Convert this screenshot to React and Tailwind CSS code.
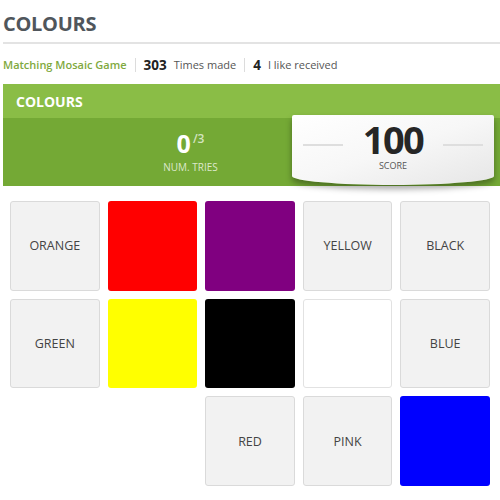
import React from "react";

const cells = [
    { label: "ORANGE" }, { color: "bg-[#ff0000]" }, { color: "bg-[#800080]" }, { label: "YELLOW" }, { label: "BLACK" },
    { label: "GREEN" }, { color: "bg-[#ffff00]" }, { color: "bg-[#000000]" }, { color: "bg-white border border-[#e2e2e2]" }, { label: "BLUE" },
    null, null, { label: "RED" }, { label: "PINK" }, { color: "bg-[#0000ff]" },
];

function Card({ cell }) {
    if (!cell) return <div />;
    if (cell.label) {
        return (
            <div className="aspect-square rounded-[3px] border border-[#dadada] bg-[#f2f2f2] flex items-center justify-center pt-[2px] text-[12.5px] text-[#444]">
                {cell.label}
            </div>
        );
    }
    return <div className={`aspect-square rounded-[3px] ${cell.color}`} />;
}

export default function App() {
    return (
        <div className="w-[500px] h-[500px] bg-white pl-[3px] font-['Open_Sans',sans-serif] overflow-hidden">
            <h1 className="pt-[10px] text-[20px] leading-[28px] font-bold text-[#50565c] tracking-[-0.3px]">COLOURS</h1>
            <div className="mt-[4px] h-[2px] bg-[#e3e3e3]" />

            <div className="mt-[11px] h-[20px] flex items-center">
                <span className="text-[11px] font-semibold text-[#7fa93e]">Matching Mosaic Game</span>
                <span className="w-px h-[14px] bg-[#dcdcdc] mx-[8px]" />
                <span className="text-[13.5px] font-bold text-[#222]">303</span>
                <span className="ml-[7px] text-[11px] text-[#555]">Times made</span>
                <span className="w-px h-[14px] bg-[#dcdcdc] mx-[8px]" />
                <span className="text-[13.5px] font-bold text-[#222]">4</span>
                <span className="ml-[7px] text-[11px] text-[#555]">I like received</span>
            </div>

            <div className="mt-[9px]">
                <div className="h-[34px] bg-[#8abd46] flex items-center pl-[13px]">
                    <span className="text-[14px] font-bold text-white">COLOURS</span>
                </div>
                <div className="h-[68px] bg-[#74a935] flex">
                    <div className="flex-1 flex justify-center pl-[86px]">
                        <div className="flex flex-col items-center pt-[13px]">
                            <div className="flex items-start">
                                <span className="text-[25px] leading-[25px] font-bold text-white">0</span>
                                <span className="ml-[2px] mt-[1px] text-[12px] leading-[14px] font-semibold text-white/70">/3</span>
                            </div>
                            <span className="mt-[5px] text-[10px] leading-[12px] text-white/75">NUM. TRIES</span>
                        </div>
                    </div>
                    <div className="relative z-10 -mt-[3px] mr-[6px] w-[202px] h-[70px] rounded-t-[2px] rounded-b-[50%_9px] bg-gradient-to-br from-white via-[#f7f7f7] to-[#e6e6e6] shadow-[0_4px_6px_rgba(0,0,0,0.35)] pt-[8px] flex flex-col items-center">
                        <div className="w-full px-[11px] flex justify-between items-start">
                            <span className="mt-[21px] w-[40px] h-[2px] bg-[#dedede]" />
                            <span className="text-[38px] leading-[32px] font-bold text-[#262626] tracking-[-1.5px]">100</span>
                            <span className="mt-[21px] w-[40px] h-[2px] bg-[#dedede]" />
                        </div>
                        <span className="mt-[5px] text-[9px] leading-[12px] text-[#555]">SCORE</span>
                    </div>
                </div>
            </div>

            <div className="mt-[15px] pl-[7px]">
                <div className="w-[480px] grid grid-cols-5 gap-2">
                    {cells.map((cell, i) => (
                        <Card key={i} cell={cell} />
                    ))}
                </div>
            </div>
        </div>
    );
}
